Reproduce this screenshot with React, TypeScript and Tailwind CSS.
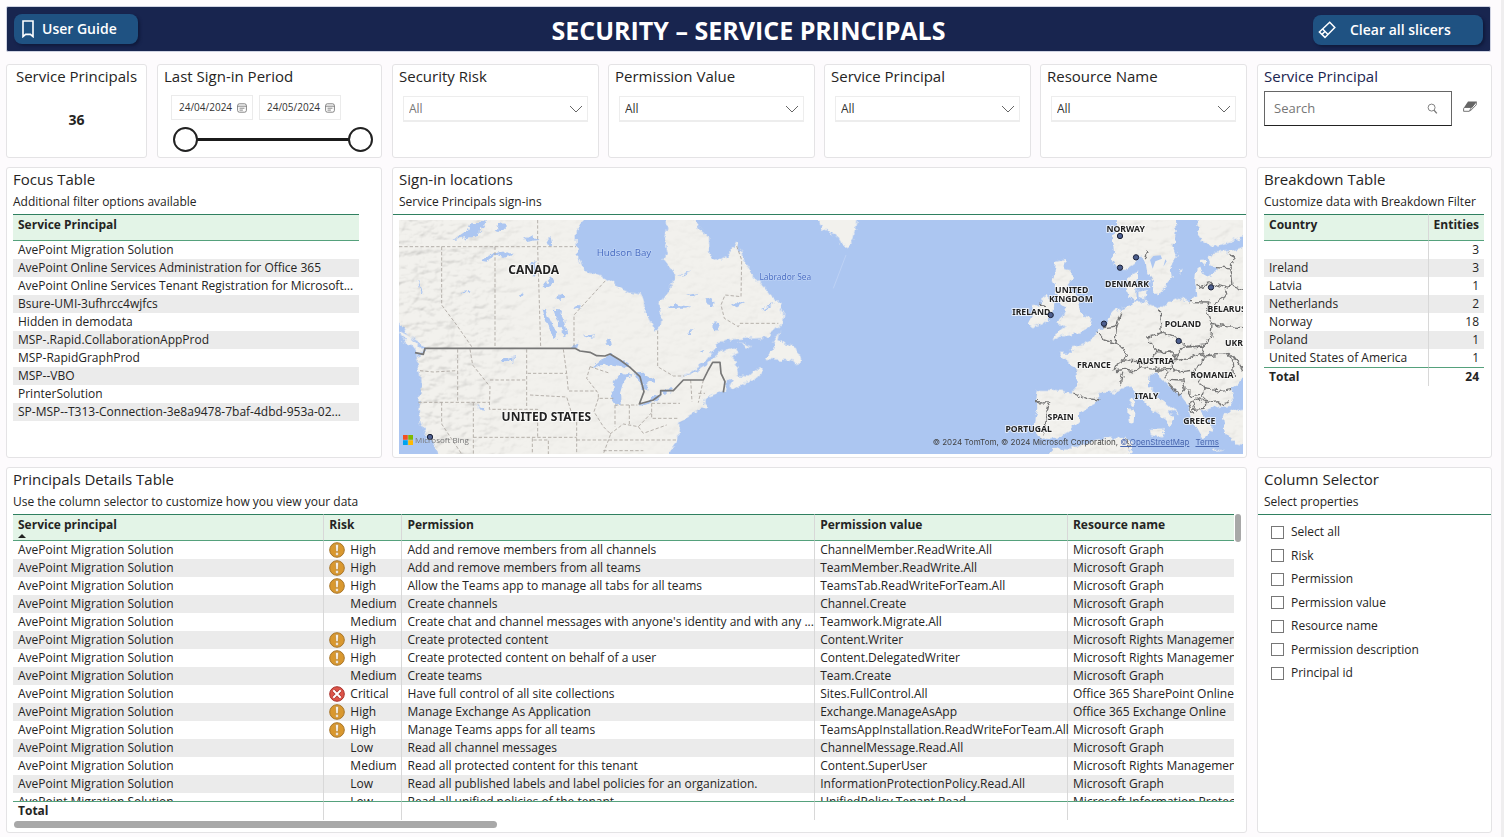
import { useState } from 'react'
import type { ReactNode } from 'react'
import clsx from 'clsx'

const focusRows = [
  'AvePoint Migration Solution',
  'AvePoint Online Services Administration for Office 365',
  'AvePoint Online Services Tenant Registration for Microsoft...',
  'Bsure-UMI-3ufhrcc4wjfcs',
  'Hidden in demodata',
  'MSP-.Rapid.CollaborationAppProd',
  'MSP-RapidGraphProd',
  'MSP--VBO',
  'PrinterSolution',
  'SP-MSP--T313-Connection-3e8a9478-7baf-4dbd-953a-02...',
]

const countries: [string, number][] = [
  ['', 3],
  ['Ireland', 3],
  ['Latvia', 1],
  ['Netherlands', 2],
  ['Norway', 18],
  ['Poland', 1],
  ['United States of America', 1],
]

const graph = 'Microsoft Graph'
const rights = 'Microsoft Rights Management Services'

// risk, permission, permission value, resource name
const details: [string, string, string, string][] = [
  ['High', 'Add and remove members from all channels', 'ChannelMember.ReadWrite.All', graph],
  ['High', 'Add and remove members from all teams', 'TeamMember.ReadWrite.All', graph],
  ['High', 'Allow the Teams app to manage all tabs for all teams', 'TeamsTab.ReadWriteForTeam.All', graph],
  ['Medium', 'Create channels', 'Channel.Create', graph],
  ['Medium', "Create chat and channel messages with anyone's identity and with any ...", 'Teamwork.Migrate.All', graph],
  ['High', 'Create protected content', 'Content.Writer', rights],
  ['High', 'Create protected content on behalf of a user', 'Content.DelegatedWriter', rights],
  ['Medium', 'Create teams', 'Team.Create', graph],
  ['Critical', 'Have full control of all site collections', 'Sites.FullControl.All', 'Office 365 SharePoint Online'],
  ['High', 'Manage Exchange As Application', 'Exchange.ManageAsApp', 'Office 365 Exchange Online'],
  ['High', 'Manage Teams apps for all teams', 'TeamsAppInstallation.ReadWriteForTeam.All', graph],
  ['Low', 'Read all channel messages', 'ChannelMessage.Read.All', graph],
  ['Medium', 'Read all protected content for this tenant', 'Content.SuperUser', rights],
  ['Low', 'Read all published labels and label policies for an organization.', 'InformationProtectionPolicy.Read.All', graph],
  ['Low', 'Read all unified policies of the tenant.', 'UnifiedPolicy.Tenant.Read', 'Microsoft Information Protection Sync Service'],
]

const properties = [
  'Select all',
  'Risk',
  'Permission',
  'Permission value',
  'Resource name',
  'Permission description',
  'Principal id',
]

function Card({ children, className }: { children: ReactNode; className?: string }) {
  return (
    <section className={clsx('min-w-0 rounded-[3px] border border-[#e4e3e5] bg-white', className)}>
      {children}
    </section>
  )
}

function CardTitle({ title, subtitle }: { title: string; subtitle: string }) {
  return (
    <div className="px-[6px] pt-[1px] pb-[3px]">
      <h2 className="text-[15px] leading-5">{title}</h2>
      <p className="mt-1 text-xs leading-[18px] whitespace-nowrap">{subtitle}</p>
    </div>
  )
}

function Slicer({ label, muted }: { label: string; muted?: boolean }) {
  const id = label.toLowerCase().replace(' ', '-')
  return (
    <Card className="px-[6px] pt-[1px]">
      <label htmlFor={id} className="block text-[15px] leading-5">
        {label}
      </label>
      <div className="relative mt-[10px] mr-1 ml-1">
        <select
          id={id}
          className={clsx(
            'block h-[26px] w-full appearance-none border border-b-2 border-[#ededed] bg-white px-[5px] text-xs outline-none',
            muted ? 'text-[#777]' : 'text-[#333]',
          )}
        >
          <option>All</option>
        </select>
        <svg
          viewBox="0 0 14 8"
          className="pointer-events-none absolute top-[9px] right-[5px] h-2 w-[14px]"
          fill="none"
          stroke="#666"
        >
          <path d="M1 1l6 6 6-6" />
        </svg>
      </div>
    </Card>
  )
}

function DateBox({ label, value }: { label: string; value: string }) {
  return (
    <div className="flex h-[25px] w-[82px] items-center border border-[#ebebeb] pr-[5px] pl-[7px]">
      <input
        aria-label={label}
        defaultValue={value}
        className="w-0 grow text-[10px] text-[#333] outline-none"
      />
      <svg viewBox="0 0 10 10" className="h-[10px] w-[10px] shrink-0" fill="none" stroke="#666" strokeWidth=".8">
        <rect x=".6" y=".8" width="8.8" height="8.4" rx="1.8" />
        <path d="M.6 3.2h8.8M2.5 5.2h5M2.5 7.1h3.4" />
      </svg>
    </div>
  )
}

const rangeClass =
  'pointer-events-none absolute inset-0 h-[25px] w-full appearance-none bg-transparent [&::-webkit-slider-thumb]:pointer-events-auto [&::-webkit-slider-thumb]:h-[25px] [&::-webkit-slider-thumb]:w-[25px] [&::-webkit-slider-thumb]:appearance-none [&::-webkit-slider-thumb]:rounded-full [&::-webkit-slider-thumb]:border-2 [&::-webkit-slider-thumb]:border-[#222] [&::-webkit-slider-thumb]:bg-white'

function PeriodSlicer() {
  return (
    <Card className="grow px-[6px] pt-[1px]">
      <h2 className="text-[15px] leading-5">Last Sign-in Period</h2>
      <div className="mt-[9px] ml-[7px] flex gap-[6px]">
        <DateBox label="From" value="24/04/2024" />
        <DateBox label="To" value="24/05/2024" />
      </div>
      <div className="relative mt-[7px] mr-[2px] ml-[9px] flex h-[25px] items-center">
        <div className="mx-3 h-[3px] grow bg-[#1b1b1b]" />
        <input type="range" aria-label="Period start" defaultValue={0} className={rangeClass} />
        <input type="range" aria-label="Period end" defaultValue={100} className={rangeClass} />
      </div>
    </Card>
  )
}

function SearchSlicer() {
  return (
    <Card className="px-[6px] pt-[1px] pb-[10px]">
      <label htmlFor="search" className="block text-[15px] leading-5 text-[#1b2550]">
        Service Principal
      </label>
      <div className="mt-[5px] flex items-start">
        <div className="flex h-[35px] min-w-0 grow items-center border border-[#666] border-b-[#222] pr-[13px] pl-[9px]">
          <input
            id="search"
            placeholder="Search"
            className="w-0 grow text-[13px] outline-none placeholder:text-[#767676]"
          />
          <button aria-label="Search">
            <svg viewBox="0 0 12 12" className="block h-[11px] w-[11px]" fill="none" stroke="#777">
              <circle cx="5" cy="5" r="3.8" />
              <path d="M7.7 7.9l3 3.4" strokeWidth="1.4" />
            </svg>
          </button>
        </div>
        <button aria-label="Clear search" className="mt-[10px] mr-2 ml-[11px]">
          <svg viewBox="0 0 14 11" className="block h-[11px] w-[14px]">
            <path d="M1.2 6.5h7.2L6.3 10.3H.6V7.8zM8.6 6.8l4.7-6v3L7 10.2" fill="#fff" stroke="#666" strokeWidth=".9" />
            <path d="M5 .5h8.5L9.3 6.3H1.2z" fill="#666" />
          </svg>
        </button>
      </div>
    </Card>
  )
}

function RiskIcon({ risk }: { risk: string }) {
  if (risk === 'High') {
    return (
      <svg viewBox="0 0 16 16" className="h-4 w-4 shrink-0">
        <circle cx="8" cy="8" r="7.3" fill="#d9982f" stroke="#a8762a" />
        <path d="M6.6 2.6h2.8l-.4 7H7z" fill="#fff" stroke="#a8762a" strokeWidth=".5" />
        <circle cx="8" cy="12" r="1.4" fill="#fff" stroke="#a8762a" strokeWidth=".4" />
      </svg>
    )
  }
  if (risk === 'Critical') {
    return (
      <svg viewBox="0 0 16 16" className="h-4 w-4 shrink-0">
        <circle cx="8" cy="8" r="7.3" fill="#dd5449" stroke="#a8322c" />
        <path d="M4.3 4.3l7.4 7.4M11.7 4.3l-7.4 7.4" stroke="#a8322c" strokeWidth="3.4" />
        <path d="M4.3 4.3l7.4 7.4M11.7 4.3l-7.4 7.4" stroke="#fff" strokeWidth="2" />
      </svg>
    )
  }
  return <span className="w-4 shrink-0" />
}

function MapLabel({ x, y, size, children }: { x: number; y: number; size: number; children: string }) {
  return (
    <text
      x={x}
      y={y}
      fontSize={size}
      fontWeight="700"
      textAnchor="middle"
      fill="#222"
      stroke="#fff"
      strokeWidth="5"
      strokeOpacity=".8"
      paintOrder="stroke"
    >
      {children}
    </text>
  )
}

const landAmerica =
  'M20 170H585L560 215 560 290 568 300 585 335 620 345 652 358 690 385 720 398 755 403 762 425 764 460 778 480 787 502 800 512 812 490 816 460 808 430 835 392 850 362 848 335 830 312 820 298 832 270 824 240 832 205 828 170H905L925 202 942 220 957 228 958 282 985 302 1012 288 1026 272 1038 248 1052 270 1062 300 1078 320 1088 350 1112 370 1135 400 1165 430 1180 458 1176 490 1150 515 1126 534 1090 535 1010 538 985 550 968 572 935 615 900 640 870 652 905 645 950 610 985 585 1012 567 1038 562 1046 578 1022 590 1036 606 1045 645 1075 650 1108 620 1114 638 1098 655 1060 672 1032 692 1018 680 1030 655 1008 662 1003 690 970 705 942 716 940 728 952 740 915 760 884 780 868 794 864 840 850 862 828 890H148L130 850 105 822 92 785 85 742 92 690 90 640 76 588 100 582 105 565 85 545 52 525 40 500 20 490z'

const landEurope = [
  // Scandinavia
  'M350 50L352 85 335 110 343 140 345 160 335 178 355 205 380 207 405 188 418 165 430 175 438 190 440 215 455 240 457 270 475 287 492 262 515 232 512 200 530 170 520 140 527 100 525 50z',
  'M593 50L592 92 605 122 638 140 690 126 740 108V50z',
  // continent
  'M740 138L690 152 642 158 622 170 632 195 650 205 637 230 612 225 600 205 588 215 585 245 592 285 570 305 540 293 500 310 480 326 455 318 438 303 408 306 386 292 380 262 380 236 400 220 416 212 408 250 410 292 398 308 372 322 345 332 330 350 316 380 292 395 275 420 245 435 214 442 218 458 178 458 188 474 213 488 230 520 230 560 215 580 165 573 110 573 105 600 115 620 103 680 110 705 148 716 180 712 208 693 240 660 240 640 265 620 298 602 297 585 322 573 350 578 372 562 395 560 420 590 452 625 497 655 508 682 522 656 503 638 520 636 545 645 512 622 472 588 445 558 450 530 470 515 490 545 540 585 565 615 570 650 588 680 608 716 622 700 642 688 612 650 600 635 640 622 692 618 702 600 695 570 718 545 740 520z',
  'M668 645L700 628 740 622V735L705 730 678 700z',
  // islands
  'M168 185L195 180 190 205 215 212 215 240 200 260 230 285 240 320 245 350 276 355 270 380 235 400 190 405 160 417 175 392 200 382 172 370 190 345 200 325 182 310 170 290 165 260 158 240 165 210z',
  'M125 300L145 287 160 312 155 350 130 372 100 383 84 370 98 342 92 320 120 312z',
  'M415 275L440 270 436 298 416 292z',
  'M450 690L495 688 485 712 452 702z',
  'M385 625L404 628 400 670 386 668z',
  'M390 592L402 600 397 620 388 612z',
  'M635 745L680 748 640 752z',
  'M604 180L616 178 614 192 602 190z',
  'M540 215L548 205 544 225z',
  // north Africa
  'M140 775L155 745 215 745 290 718 382 714 395 732 388 775z',
].join('')

const landIslands =
  'M1285 175L1300 210 1340 225 1355 250 1370 262 1390 240 1400 175zM1170 510L1165 540 1200 555 1220 570 1230 595 1228 620 1215 605 1185 600 1130 597 1145 565 1160 530zM1044 545L1085 560 1070 562zM27 512L60 530 95 565 98 578 70 566 30 528z'

const lakes =
  'M607 620L635 598 660 582 690 596 722 620 715 630 690 618 665 612 640 618zM668 720L668 672 690 645 735 638 712 655 698 672 690 700 692 735 678 735zM735 640L762 638 790 655 796 668 772 665 772 692 758 684 746 658zM752 735L790 712 815 706 800 722 765 735zM808 700L820 688 852 684 845 697zM458 448L468 443 476 470 492 505 504 536 490 530 468 485zM488 446L508 448 522 480 532 528 524 532 508 500zM272 302L300 282 345 274 368 284 345 294 315 288 290 305zM190 240L235 208 240 190 275 188 292 180 275 212 255 230zM318 210L328 190 348 196 330 214zM400 238L430 222 445 240 410 246zM470 240L485 232 492 262 478 258zM420 318L436 302 440 332 428 350zM455 385L480 350 500 348 485 378zM498 412L515 404 525 412 510 420zM214 396L235 393 242 398 222 400zM388 404L402 398 406 406 392 410zM548 442L565 434 572 445 552 450zM582 530L610 526 600 538zM648 540L662 534 666 556 650 554zM832 445L850 432 905 440 880 446 850 446zM948 420L962 412 976 425 968 440 952 436zM1026 434L1045 424 1068 430 1040 442zM966 498L978 486 984 500 976 514zM892 522L908 504 902 522zM864 348L905 330 880 346zM893 408L925 402 908 412zM1112 448L1135 436 1155 432 1130 446zM78 360L100 400 92 398zM262 738L275 742 286 752 272 750zM335 598L375 592 372 610 365 600 340 604zM550 552L566 548 562 566 550 564zM924 574L940 570 932 580z'

const stateLines =
  'M27 260H558M155 260V435L200 495 245 560M315 260V562M443 180V262L452 562M552 560V465L650 358M803 512V620L850 648 882 648M1040 258L1055 300 1053 410 1005 405 993 435 1003 475 1045 500 1050 490H1165M203 568V725M90 632L130 636 200 632M85 727H298M155 727V792L215 882M250 727V882M240 568L248 615 300 680 298 748H443V832M300 660H410M410 568V745M413 640H530M420 705L530 711 545 760 560 785V882M520 568L530 640 535 693H620M250 832H560M427 835V882M475 842V882M430 840H475M560 840H640M600 620L590 655 625 700V715H670M625 715L612 755 640 800 662 822 640 882M675 735V800M718 735V792M675 735H742M660 822L700 792 745 800 785 758M785 730H870M785 730V775H862M640 840H860M745 800L760 820 830 795M640 872H760M902 660L906 725M940 660L925 728M925 700H945M600 620L660 640'

const europeBorders =
  'M445 60L455 85 440 110 447 140 435 178M729 80L692 130M480 325L484 360 487 398 446 408 450 430 480 455 512 452M487 400L530 415 550 437 575 440 613 435 632 410 636 375 620 340 630 306 570 305M636 375L680 380 729 383M590 262L632 250 675 262 680 282 640 312M648 203L690 207 696 255 675 262M690 155L702 180 690 207M696 255L729 268M290 393L312 420 345 430 378 447 372 480 352 492 345 514M365 338L350 378 312 383M350 378L345 428M350 512L372 508 400 516 420 502 412 482 372 480M412 488L450 490 470 455 520 456 525 475 512 505 470 508 420 502M368 518L360 558M520 482L560 477 596 460 612 480 582 510 530 517 512 503M525 470L552 442 613 438 608 462 596 460M604 468L640 465 690 460 718 492 729 512M684 460L700 492 704 530M582 510L604 548 615 566 660 574 695 568M615 566L607 590 622 604M470 513L500 512 502 535M505 538L550 540 556 568 538 585 505 548M556 568L578 590 603 585M578 605L595 597 615 605 612 625 585 628zM575 600L565 606 582 640M615 608L655 602 660 615 692 605M220 579L260 595 298 600M108 605L146 606 137 640 142 662 126 706M118 312L138 318M380 715L388 745'

const europeLabels: [string, number, number][] = [
  ['NORWAY', 377, 95],
  ['DENMARK', 381, 261],
  ['UNITED', 215, 278],
  ['KINGDOM', 213, 306],
  ['IRELAND', 94, 346],
  ['BELARUS', 680, 337],
  ['POLAND', 549, 382],
  ['UKR', 702, 439],
  ['AUSTRIA', 466, 492],
  ['FRANCE', 282, 505],
  ['ROMANIA', 636, 534],
  ['ITALY', 440, 596],
  ['SPAIN', 182, 659],
  ['GREECE', 598, 673],
  ['PORTUGAL', 86, 695],
]

const pins: [number, number][] = [
  [2190, 228],
  [2238, 292],
  [2190, 323],
  [2463, 382],
  [1982, 465],
  [2142, 491],
  [2366, 543],
  [120, 831],
]

function SignInMap() {
  return (
    <div className="relative mt-[5px] mr-[3px] mb-[3px] ml-[6px] overflow-hidden bg-[#acc6f1] font-['Noto_Sans','Open_Sans',sans-serif]">
      <svg
        viewBox="27 180 2532 702"
        preserveAspectRatio="xMidYMid slice"
        className="block h-[234px] w-full"
        role="img"
        aria-label="Map of service principal sign-in locations"
      >
        <defs>
          <filter id="coast" filterUnits="userSpaceOnUse" x="0" y="150" width="2600" height="760">
            <feTurbulence type="fractalNoise" baseFrequency=".05" numOctaves="3" result="n" />
            <feDisplacementMap in="SourceGraphic" in2="n" scale="22" xChannelSelector="R" yChannelSelector="G" />
          </filter>
          <filter id="relief" filterUnits="userSpaceOnUse" x="0" y="150" width="2600" height="760">
            <feTurbulence type="fractalNoise" baseFrequency=".022 .036" numOctaves="4" seed="4" />
            <feDiffuseLighting surfaceScale="12" diffuseConstant="1.15" lightingColor="#fff">
              <feDistantLight azimuth="235" elevation="62" />
            </feDiffuseLighting>
          </filter>
          <clipPath id="land">
            <path d={landAmerica} />
            <path d={landEurope} transform="translate(1830 120)" />
          </clipPath>
          <linearGradient id="fade">
            <stop offset="0" stopColor="#fff" stopOpacity=".4" />
            <stop offset=".1" stopColor="#fff" stopOpacity=".35" />
            <stop offset=".16" stopColor="#fff" stopOpacity=".08" />
            <stop offset=".7" stopColor="#fff" stopOpacity=".08" />
            <stop offset=".85" stopColor="#fff" stopOpacity=".14" />
          </linearGradient>
          <mask id="hills" maskUnits="userSpaceOnUse" x="0" y="150" width="2600" height="760">
            <rect x="0" y="150" width="2600" height="760" fill="url(#fade)" />
          </mask>
        </defs>

        <g filter="url(#coast)" fill="#f2f1ed">
          <path d={landAmerica} />
          <path d={landIslands} />
          <path d={landEurope} transform="translate(1830 120)" />
        </g>
        <g clipPath="url(#land)" className="mix-blend-multiply">
          <g mask="url(#hills)">
            <rect x="0" y="150" width="2600" height="760" filter="url(#relief)" />
          </g>
        </g>
        <path d={lakes} fill="#acc6f1" filter="url(#coast)" />
        <path d="M2280 300l10-12 22-2 4 10-20 8-8 22zM2320 320l6-22 4 6z" fill="#acc6f1" />

        <g fill="none" strokeLinejoin="round">
          <path d={stateLines} stroke="#a9a49e" strokeWidth="2.5" strokeDasharray="10 6" />
          <path
            d="M75 578L100 583 105 565H555L570 573 600 577 620 587 645 588 660 582 690 600 720 622 750 650 762 695 748 732 790 720 812 704 812 692H850L880 660H940L955 630 968 607H990L993 640 1005 665 1000 697"
            stroke="#777"
            strokeWidth="5"
          />
          <path d={europeBorders} transform="translate(1830 120)" stroke="#777" strokeWidth="4" filter="url(#coast)" />
        </g>
        <path d="M1368 285L1330 385" stroke="#bdd1f4" strokeWidth="3" />

        <MapLabel x={431} y={342} size={36}>CANADA</MapLabel>
        <MapLabel x={469} y={782} size={36}>UNITED STATES</MapLabel>
        <g fill="#4b6fc4" textAnchor="middle" stroke="#c3d6f6" strokeWidth="3" paintOrder="stroke">
          <text x="702" y="289" fontSize="29">Hudson Bay</text>
          <text x="1186" y="359" fontSize="25">Labrador Sea</text>
        </g>
        <g transform="translate(1830 120)">
          {europeLabels.map(([name, x, y]) => (
            <MapLabel key={name} x={x} y={y} size={26}>
              {name}
            </MapLabel>
          ))}
        </g>
        {pins.map(([x, y]) => (
          <circle key={`${x}-${y}`} cx={x} cy={y} r="8" fill="#4d5f8f" stroke="#1c2238" strokeWidth="3" />
        ))}
      </svg>

      <div className="absolute bottom-2 left-1 flex items-center gap-[2px] font-['Open_Sans',sans-serif] text-[8px] leading-3 text-[#777]">
        <svg viewBox="0 0 21 21" className="h-[10px] w-[10px]">
          <path d="M0 0h10v10H0z" fill="#f25022" />
          <path d="M11 0h10v10H11z" fill="#7fba00" />
          <path d="M0 11h10v10H0z" fill="#00a4ef" />
          <path d="M11 11h10v10H11z" fill="#ffb900" />
        </svg>
        Microsoft Bing
      </div>
      <p className="absolute right-6 bottom-[6px] font-['Inter','Liberation_Sans',sans-serif] text-[8px] leading-3 whitespace-nowrap text-[#444]">
        © 2024 TomTom, © 2024 Microsoft Corporation,{' '}
        <a href="#osm" className="text-[#4a68b0] underline">
          © OpenStreetMap
        </a>
        <a href="#terms" className="ml-[6px] text-[#4a68b0] underline">
          Terms
        </a>
      </p>
    </div>
  )
}

const headCell = 'h-[27px] border-y border-t-[#2f8060] border-b-[#55a17c] bg-[#e3f4e7] px-[5px] pt-[1px] align-top font-bold whitespace-nowrap'
const footCell = 'h-[18px] border-t border-[#55a17c] bg-white px-[5px]'
const divider = 'border-r border-r-[#d8d8d8]'

function FocusTable() {
  return (
    <Card>
      <CardTitle title="Focus Table" subtitle="Additional filter options available" />
      <table className="mr-[22px] ml-[6px] w-[calc(100%-28px)] table-fixed border-separate border-spacing-0 text-left text-xs leading-[18px]">
        <thead>
          <tr>
            <th className={headCell}>Service Principal</th>
          </tr>
        </thead>
        <tbody>
          {focusRows.map((name) => (
            <tr key={name} className="even:bg-[#ebebeb]">
              <td className="h-[18px] truncate px-[5px]">{name}</td>
            </tr>
          ))}
        </tbody>
      </table>
    </Card>
  )
}

function BreakdownTable() {
  return (
    <Card>
      <CardTitle title="Breakdown Table" subtitle="Customize data with Breakdown Filter" />
      <div className="mr-[7px] ml-[6px]">
        <table className="w-full border-separate border-spacing-0 text-left text-xs leading-[18px]">
          <thead>
            <tr>
              <th className={clsx(headCell, divider)}>Country</th>
              <th className={clsx(headCell, 'w-[54px] text-right')}>Entities</th>
            </tr>
          </thead>
          <tbody>
            {countries.map(([country, count]) => (
              <tr key={country} className="even:bg-[#ebebeb]">
                <td className={clsx('h-[18px] px-[5px] whitespace-nowrap', divider)}>{country}</td>
                <td className="px-[5px] text-right">{count}</td>
              </tr>
            ))}
          </tbody>
          <tfoot>
            <tr>
              <th className={clsx(footCell, divider, 'font-bold')}>Total</th>
              <td className={clsx(footCell, 'text-right font-bold')}>24</td>
            </tr>
          </tfoot>
        </table>
      </div>
    </Card>
  )
}

function DetailsTable() {
  const cell = 'h-[18px] pl-[5px] whitespace-nowrap'

  return (
    <Card className="col-span-2 pb-[4px]">
      <CardTitle
        title="Principals Details Table"
        subtitle="Use the column selector to customize how you view your data"
      />
      <div className="mr-[5px] ml-[6px] flex gap-[1px]">
        <div className="h-[306px] min-w-0 grow overflow-hidden">
          <table className="w-full table-fixed border-separate border-spacing-0 text-left text-xs leading-[18px]">
            <colgroup>
              <col className="w-[25.5%]" />
              <col className="w-[6.4%]" />
              <col className="w-[33.8%]" />
              <col className="w-[20.7%]" />
              <col />
            </colgroup>
            <thead className="sticky top-0">
              <tr>
                <th className={clsx(headCell, divider)}>
                  Service principal
                  <svg viewBox="0 0 8 4" className="block h-1 w-2">
                    <path d="M0 4l4-4 4 4z" fill="#222" />
                  </svg>
                </th>
                <th className={clsx(headCell, divider)}>Risk</th>
                <th className={clsx(headCell, divider)}>Permission</th>
                <th className={clsx(headCell, divider)}>Permission value</th>
                <th className={headCell}>Resource name</th>
              </tr>
            </thead>
            <tbody>
              {details.map(([risk, permission, value, resource]) => (
                <tr key={permission} className="even:bg-[#ebebeb]">
                  <td className={clsx(cell, divider)}>AvePoint Migration Solution</td>
                  <td className={clsx(cell, divider)}>
                    <div className="flex items-center gap-[5px]">
                      <RiskIcon risk={risk} />
                      {risk}
                    </div>
                  </td>
                  <td className={clsx(cell, divider)}>{permission}</td>
                  <td className={clsx(cell, divider)}>{value}</td>
                  <td className={cell}>{resource}</td>
                </tr>
              ))}
            </tbody>
            <tfoot className="sticky bottom-0">
              <tr>
                <th className={clsx(footCell, divider, 'font-bold')}>Total</th>
                <td className={clsx(footCell, divider)} />
                <td className={clsx(footCell, divider)} />
                <td className={clsx(footCell, divider)} />
                <td className={footCell} />
              </tr>
            </tfoot>
          </table>
        </div>
        <div className="h-7 w-[6px] shrink-0 rounded-full bg-[#a8a8a8]" />
      </div>
      <div className="mt-[1px] ml-[7px] h-[7px] w-[39%] rounded-full bg-[#a8a8a8]" />
    </Card>
  )
}

function ColumnSelector() {
  const [selected, setSelected] = useState<string[]>([])

  function toggle(name: string) {
    setSelected((prev) => (prev.includes(name) ? prev.filter((p) => p !== name) : [...prev, name]))
  }

  return (
    <Card>
      <div className="border-b border-[#2f8060]">
        <CardTitle title="Column Selector" subtitle="Select properties" />
      </div>
      <div className="mt-2 ml-[13px] flex h-[159px] flex-col justify-between text-xs leading-[18px]">
        {properties.map((name) => (
          <label key={name} className="flex items-center gap-[7px]">
            <input
              type="checkbox"
              checked={selected.includes(name)}
              onChange={() => toggle(name)}
              className="h-[13px] w-[13px] appearance-none border border-[#777] bg-white checked:bg-[#333]"
            />
            {name}
          </label>
        ))}
      </div>
    </Card>
  )
}

export default function App() {
  return (
    <div className="min-h-screen border-r-[3px] border-[#efeeef] bg-[#fdfbfd] pt-[6px] pr-[9px] pb-[3px] pl-[6px] font-['Open_Sans','Noto_Sans',sans-serif] text-[#252423]">
      <header className="mr-[1px] grid h-[46px] grid-cols-[1fr_auto_1fr] items-center rounded-[2px] border border-[#cfd3e2] bg-[#18254f] px-[7px] text-white">
        <button className="flex h-[30px] w-[124px] items-center gap-2 rounded-lg bg-[#1f5282] pl-2 text-sm font-semibold shadow-[2px_2px_3px_#101a3c]">
          <svg viewBox="0 0 12 18" className="h-[18px] w-3" fill="none" stroke="#fff" strokeWidth="1.6">
            <path d="M1 1h10v15.6l-2.6-2.2H3.6L1 16.6z" />
          </svg>
          User Guide
        </button>
        <h1 className="pt-[2px] text-[25px] leading-8 font-bold">SECURITY – SERVICE PRINCIPALS</h1>
        <button className="mt-[2px] flex h-[30px] w-[170px] items-center gap-[14px] justify-self-end rounded-lg bg-[#1f5282] pl-[5px] text-sm font-semibold shadow-[2px_2px_3px_#101a3c]">
          <svg viewBox="0 0 18 18" className="h-[18px] w-[18px]" fill="none" stroke="#fff" strokeWidth="1.5">
            <path d="M11.7 1.2l5.1 5.2L7 16.4 1.4 11zM4.6 8l5.2 5.3M4 13.4l2.7-2.6" />
          </svg>
          <span>Clear all slicers</span>
        </button>
      </header>

      <main className="mt-3 grid grid-cols-[376fr_855fr_235fr] gap-x-[10px] gap-y-[9px]">
        <div className="flex min-h-[94px] gap-[10px]">
          <Card className="w-[141px] shrink-0 pt-[1px] text-center">
            <h2 className="text-[15px] leading-5">Service Principals</h2>
            <p className="mt-6 text-sm leading-5 font-bold">36</p>
          </Card>
          <PeriodSlicer />
        </div>
        <div className="grid grid-cols-4 gap-[9px]">
          <Slicer label="Security Risk" muted />
          <Slicer label="Permission Value" />
          <Slicer label="Service Principal" />
          <Slicer label="Resource Name" />
        </div>
        <SearchSlicer />

        <FocusTable />
        <Card>
          <div className="border-b border-[#2f8060]">
            <CardTitle title="Sign-in locations" subtitle="Service Principals sign-ins" />
          </div>
          <SignInMap />
        </Card>
        <BreakdownTable />

        <DetailsTable />
        <ColumnSelector />
      </main>
    </div>
  )
}
